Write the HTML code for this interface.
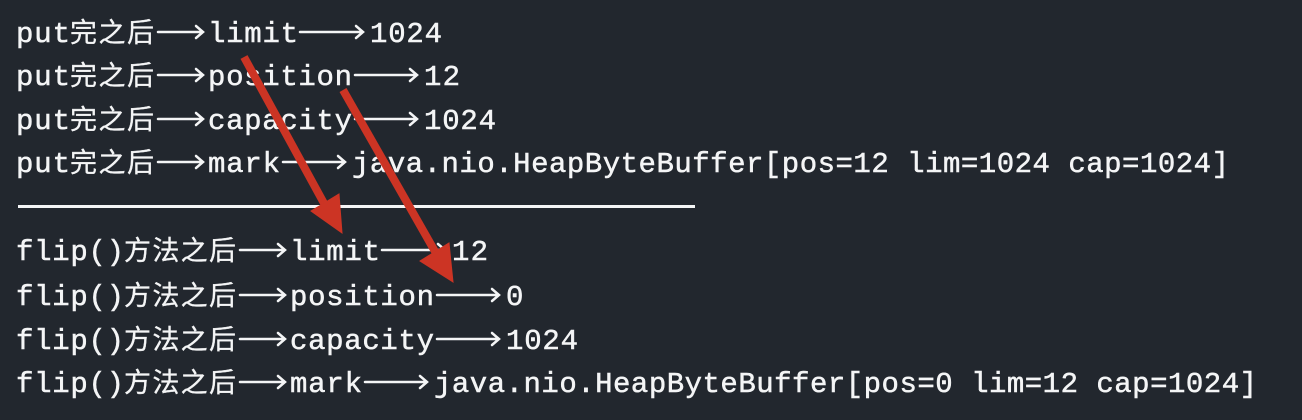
<!DOCTYPE html>
<html><head><meta charset="utf-8"><style>
html,body{margin:0;padding:0;background:#22272e;}
svg{display:block}
text{font-family:"Liberation Mono","Noto Sans CJK SC",monospace;font-size:29px;fill:#f4f5f6;stroke:#f4f5f6;stroke-width:0.5px;}
.c{font-family:"Noto Sans CJK SC","WenQuanYi Zen Hei",sans-serif;font-size:27px;stroke-width:0.3px;}
</style></head><body>
<svg width="1302" height="420" viewBox="0 0 1302 420">
<rect width="1302" height="420" fill="#22272e"/>
<g stroke="#f4f5f6" stroke-width="2.5" fill="none" stroke-linecap="round">
<path d="M158 32H202M196 26L203 32L196 38"/>
<path d="M300 32H362M356 26L363 32L356 38"/>
<path d="M158 75H202M196 69L203 75L196 81"/>
<path d="M355 75H416M410 69L417 75L410 81"/>
<path d="M158 119H202M196 113L203 119L196 125"/>
<path d="M355 119H416M410 113L417 119L410 125"/>
<path d="M158 162H202M196 156L203 162L196 168"/>
<path d="M283 162H344M338 156L345 162L338 168"/>
<path d="M240 250H284M278 244L285 250L278 256"/>
<path d="M382 250H444M438 244L445 250L438 256"/>
<path d="M240 295H284M278 289L285 295L278 301"/>
<path d="M437 295H498M492 289L499 295L492 301"/>
<path d="M240 339H284M278 333L285 339L278 345"/>
<path d="M437 339H498M492 333L499 339L492 345"/>
<path d="M240 382H284M278 376L285 382L278 388"/>
<path d="M365 382H426M420 376L427 382L420 388"/>
</g>
<rect x="18" y="205" width="677" height="3" fill="#f4f5f6"/>
<g>
<text x="16" y="42" textLength="54">put</text><text class="c" x="70" y="42" textLength="84">完之后</text><text x="208" y="42" textLength="90">limit</text><text x="370" y="42" textLength="72">1024</text>
<text x="16" y="85" textLength="54">put</text><text class="c" x="70" y="85" textLength="84">完之后</text><text x="208" y="85" textLength="144">position</text><text x="424" y="85" textLength="36">12</text>
<text x="16" y="129" textLength="54">put</text><text class="c" x="70" y="129" textLength="84">完之后</text><text x="208" y="129" textLength="144">capacity</text><text x="424" y="129" textLength="72">1024</text>
<text x="16" y="172" textLength="54">put</text><text class="c" x="70" y="172" textLength="84">完之后</text><text x="208" y="172" textLength="72">mark</text><text x="352" y="172" textLength="877">java.nio.HeapByteBuffer[pos=12 lim=1024 cap=1024]</text>
<text x="16" y="260" textLength="108">flip()</text><text class="c" x="124" y="260" textLength="112">方法之后</text><text x="290" y="260" textLength="90">limit</text><text x="452" y="260" textLength="36">12</text>
<text x="16" y="305" textLength="108">flip()</text><text class="c" x="124" y="305" textLength="112">方法之后</text><text x="290" y="305" textLength="144">position</text><text x="506" y="305" textLength="18">0</text>
<text x="16" y="349" textLength="108">flip()</text><text class="c" x="124" y="349" textLength="112">方法之后</text><text x="290" y="349" textLength="144">capacity</text><text x="506" y="349" textLength="72">1024</text>
<text x="16" y="392" textLength="108">flip()</text><text class="c" x="124" y="392" textLength="112">方法之后</text><text x="290" y="392" textLength="72">mark</text><text x="434" y="392" textLength="823">java.nio.HeapByteBuffer[pos=0 lim=12 cap=1024]</text>
</g>
<g fill="#cc3424" stroke="#cc3424">
<line x1="244" y1="57" x2="326" y2="207" stroke-width="8"/>
<polygon points="342,233 311,211 339,194" stroke-width="1"/>
<line x1="343" y1="90" x2="437" y2="255" stroke-width="8"/>
<polygon points="453,282 420,261 449,243" stroke-width="1"/>
</g>
</svg>
</body></html>
